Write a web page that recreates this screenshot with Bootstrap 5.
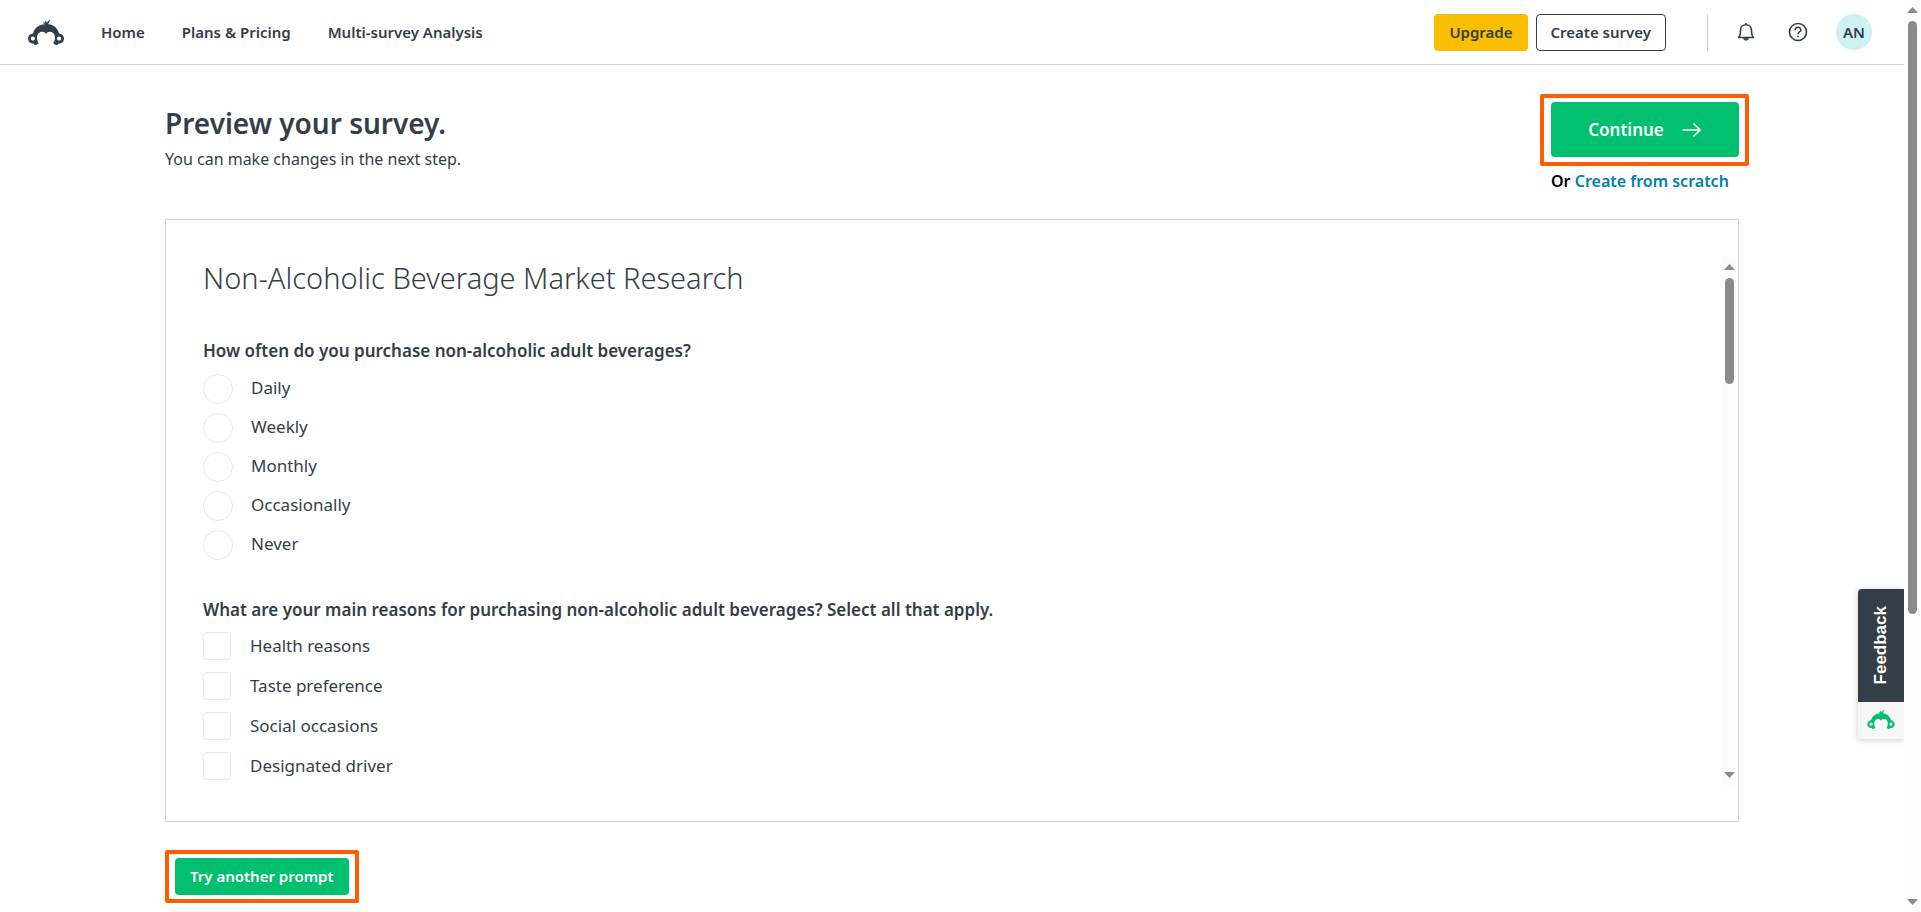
<!DOCTYPE html>
<html lang="en">
<head>
<meta charset="utf-8">
<meta name="viewport" content="width=device-width, initial-scale=1">
<title>Preview your survey</title>
<link href="https://cdn.jsdelivr.net/npm/bootstrap@5.3.0/dist/css/bootstrap.min.css" rel="stylesheet">
<style>
:root { --ink: #333e48; --green: #00bf6f; --rule: #d0d2d3; --mark: #ff5e00; --grey: #8b8b8b; }
body { font-family: "Noto Sans", "Open Sans", sans-serif; font-size: 16px; line-height: 24px; color: var(--ink); }
.top-bar { height: 65px; padding: 0 32px 0 28px; border-bottom: 1px solid var(--rule); }
.brand { color: var(--ink); line-height: 1; }
.top-links { gap: 37px; margin-left: 37px; }
.top-links a, .btn { font-size: 15px; font-weight: 600; color: var(--ink); text-decoration: none; }
.btn { height: 37px; padding: 0 15px; border-radius: 4px; white-space: nowrap; }
.btn-upgrade, .btn-upgrade:hover { background: #f9be00; color: var(--ink); }
.btn-create { border: 1px solid var(--ink); padding: 0 14px; }
.btn-go, .btn-go:hover { background: var(--green); color: #fff; }
.btn-big { width: 188px; height: 55px; font-size: 17px; gap: 18px; }
.divider { width: 1px; height: 37px; background: var(--rule); margin: 0 28px 0 41px; }
.icon-btn { border: 0; background: none; padding: 0; color: var(--ink); line-height: 0; }
.help { margin: 0 28px 0 32px; }
.avatar { width: 36px; height: 36px; background: #cdf2f4; font-size: 15px; font-weight: 600; }
.content { padding: 37px 165px 6px; }
.intro { padding-top: 3px; }
h1 { font-size: 28px; line-height: 36px; font-weight: 600; margin: 0 0 6px; }
.side { width: 188px; }
.scratch { font-weight: 600; color: #000; white-space: nowrap; margin: 12px 0 26px; }
.scratch a { color: #007faa; text-decoration: none; }
.marked { position: relative; }
.marked::after { content: ""; position: absolute; inset: -8px -10px -9px -11px; border: 4px solid var(--mark); border-radius: 2px; pointer-events: none; }
.framed { width: fit-content; margin-top: 28px; border: 4px solid var(--mark); border-radius: 2px; padding: 4px 6px; }
.preview { border: 1px solid var(--rule); padding: 37px 0 36px 37px; }
.survey { height: 528px; overflow: hidden; }
h2 { font-size: 29px; line-height: 40px; font-weight: 300; margin: 1px 0 41px; }
legend { font-size: 17px; line-height: 24px; font-weight: 600; margin-bottom: 10px; }
.choice { font-size: 17px; line-height: 28px; }
.choice .form-check-input { float: none; margin: 0; border: 1px solid #e6e7e8; }
.choice .form-check-input[type=radio] { width: 30px; height: 30px; margin-right: 18px; }
.choice .form-check-input[type=checkbox] { width: 28px; height: 28px; margin-right: 19px; border-radius: 4px; }
.radios { gap: 9px; padding-top: 1px; margin-bottom: 38px; }
.checks { gap: 12px; }
.scroll-strip { width: 17px; flex: none; background: #fcfcfc; padding: 7px 0; }
.scroll-strip i { width: 9px; background: var(--grey); border-radius: 5px; }
.scroll-strip svg { fill: var(--grey); display: block; }
.thumb-inner { height: 106px; }
.thumb-page { height: 66%; }
.feedback { position: absolute; right: 17px; top: 589px; width: 46px; border: 0; padding: 0; border-radius: 4px 0 0 4px; overflow: hidden; box-shadow: 0 1px 6px rgba(0,0,0,.2); background: #f7f7f7; }
.feedback span { height: 113px; background: var(--ink); color: #fff; font: bold 17px "Liberation Sans", sans-serif; }
.feedback b { writing-mode: vertical-rl; transform: rotate(180deg); }
.feedback svg { display: block; color: var(--green); margin: 8px auto 10px; }
</style>
<script src="https://cdn.jsdelivr.net/npm/bootstrap@5.3.0/dist/js/bootstrap.bundle.min.js" defer></script>
</head>
<body>
<svg width="0" height="0" class="d-none">
  <symbol id="logo" viewBox="0 0 36 25">
    <path fill="currentColor" fill-rule="evenodd" d="M31 13.4C29.8 8.200 25.800 4.700 20.500 4.200 20.400 2.800 21 1.500 22.400.5L21.700 0C20.200.6 19.400 1.600 19 2.700 18.700 1.800 18 1.300 17.200 1L16.800 1.600 17.600 2.800 15.500 2.300 15.200 3 17 4.200C11 4.200 6.300 8 5 13.400 2.100 13.500 0 15.800 0 18.600 0 21.600 2.300 23.700 5.100 23.700L5.900 23.600 6 24.700 8 24.900 10.300 23.800 10.600 23C9.500 21.500 9 19.700 9 18 9 14.200 11.200 11.800 14 11.800 15.800 11.800 17.200 12.600 18 14 18.800 12.600 20.200 11.800 22 11.800 24.800 11.800 27 14.200 27 18 27 19.700 26.500 21.500 25.400 23L25.700 23.800 28 24.900 30 24.700 30.100 23.600 30.900 23.700C33.700 23.700 36 21.600 36 18.600 36 15.800 33.900 13.500 31 13.400ZM4.900 16.500A2.100 2.100 0 1 1 4.900 20.700 2.100 2.100 0 1 1 4.900 16.500ZM31.100 16.500A2.100 2.100 0 1 1 31.100 20.700 2.100 2.100 0 1 1 31.100 16.500Z"/>
  </symbol>
</svg>
<div class="d-flex min-vh-100">
  <div class="flex-grow-1">
    <header class="top-bar d-flex align-items-center">
      <a href="#" aria-label="Home page" class="brand"><svg width="36" height="25"><use href="#logo"/></svg></a>
      <nav class="top-links d-flex me-auto">
        <a href="#">Home</a><a href="#">Plans &amp; Pricing</a><a href="#">Multi-survey Analysis</a>
      </nav>
      <button class="btn btn-upgrade border-0">Upgrade</button>
      <button class="btn btn-create ms-2">Create survey</button>
      <div class="divider"></div>
      <button class="icon-btn" aria-label="Notifications"><svg width="20" height="20" viewBox="0 0 20 20" fill="none" stroke="currentColor" stroke-width="1.6" stroke-linejoin="round"><path d="M10 1v1.600M2.500 15.500H17.500C15.800 13.800 15.500 12 15.500 8.500 15.500 5 13.200 2.700 10 2.700S4.500 5 4.500 8.500C4.500 12 4.200 13.800 2.500 15.500Z"/><path d="M7.500 16.200C7.500 19 12.500 19 12.500 16.200Z" fill="currentColor" stroke-width=".6"/></svg></button>
      <button class="icon-btn help" aria-label="Help"><svg width="20" height="20" viewBox="0 0 20 20" fill="none" stroke="currentColor" stroke-width="1.600"><circle cx="10" cy="10" r="8.500"/><path d="M7.200 8.200C7.200 4.300 12.800 4.400 12.800 7.900 12.800 10 10 9.900 10 12.200"/><circle cx="10" cy="14.500" r=".6" fill="currentColor" stroke-width=".8"/></svg></button>
      <button class="icon-btn avatar rounded-circle">AN</button>
    </header>
    <main class="content">
      <div class="d-flex justify-content-between">
        <div class="intro">
          <h1>Preview your survey.</h1>
          <p class="m-0">You can make changes in the next step.</p>
        </div>
        <div class="side">
          <div class="marked"><button class="btn btn-go btn-big border-0 d-flex align-items-center justify-content-center">Continue
            <svg width="20" height="16" viewBox="0 0 20 16" fill="none" stroke="currentColor" stroke-width="1.700"><path d="M.5 8H18M11.500 1.500 18 8 11.500 14.500"/></svg></button></div>
          <p class="scratch">Or <a href="#">Create from scratch</a></p>
        </div>
      </div>
      <section class="preview d-flex">
        <form class="survey flex-grow-1">
          <h2>Non-Alcoholic Beverage Market Research</h2>
          <fieldset>
            <legend>How often do you purchase non-alcoholic adult beverages?</legend>
            <div class="radios d-flex flex-column">
              <div class="choice d-flex"><input class="form-check-input" type="radio" name="often" id="r1"><label for="r1">Daily</label></div>
              <div class="choice d-flex"><input class="form-check-input" type="radio" name="often" id="r2"><label for="r2">Weekly</label></div>
              <div class="choice d-flex"><input class="form-check-input" type="radio" name="often" id="r3"><label for="r3">Monthly</label></div>
              <div class="choice d-flex"><input class="form-check-input" type="radio" name="often" id="r4"><label for="r4">Occasionally</label></div>
              <div class="choice d-flex"><input class="form-check-input" type="radio" name="often" id="r5"><label for="r5">Never</label></div>
            </div>
          </fieldset>
          <fieldset>
            <legend>What are your main reasons for purchasing non-alcoholic adult beverages? Select all that apply.</legend>
            <div class="checks d-flex flex-column">
              <div class="choice d-flex align-items-center"><input class="form-check-input" type="checkbox" id="c1"><label for="c1">Health reasons</label></div>
              <div class="choice d-flex align-items-center"><input class="form-check-input" type="checkbox" id="c2"><label for="c2">Taste preference</label></div>
              <div class="choice d-flex align-items-center"><input class="form-check-input" type="checkbox" id="c3"><label for="c3">Social occasions</label></div>
              <div class="choice d-flex align-items-center"><input class="form-check-input" type="checkbox" id="c4"><label for="c4">Designated driver</label></div>
            </div>
          </fieldset>
        </form>
        <div class="scroll-strip d-flex flex-column align-items-center">
          <svg width="11" height="6"><path d="M0 6 5.500 0 11 6Z"/></svg>
          <i class="mt-2 thumb-inner"></i>
          <svg class="mt-auto" width="11" height="6"><path d="M0 0 5.500 6 11 0Z"/></svg>
        </div>
      </section>
      <div class="framed"><button class="btn btn-go border-0 d-block">Try another prompt</button></div>
    </main>
  </div>
  <div class="scroll-strip d-flex flex-column align-items-center vh-100 sticky-top">
    <svg width="11" height="6"><path d="M0 6 5.500 0 11 6Z"/></svg>
    <i class="mt-2 thumb-page"></i>
    <svg class="mt-auto" width="11" height="6"><path d="M0 0 5.500 6 11 0Z"/></svg>
  </div>
</div>
<button class="feedback">
  <span class="d-flex align-items-center justify-content-center"><b>Feedback</b></span>
  <svg width="28" height="19"><use href="#logo"/></svg>
</button>
</body>
</html>
